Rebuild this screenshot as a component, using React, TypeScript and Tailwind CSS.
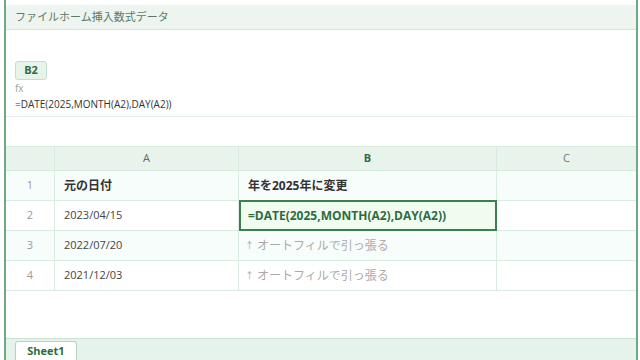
import React from "react";

const font = {
  fontFamily: '"Open Sans", "Noto Sans CJK JP", sans-serif',
};

type Row = {
  n: number;
  a: string;
  b: string;
  kind: "head" | "active" | "hint" | "plain";
};

const rows: Row[] = [
  { n: 1, a: "元の日付", b: "年を2025年に変更", kind: "head" },
  { n: 2, a: "2023/04/15", b: "=DATE(2025,MONTH(A2),DAY(A2))", kind: "active" },
  { n: 3, a: "2022/07/20", b: "オートフィルで引っ張る", kind: "hint" },
  { n: 4, a: "2021/12/03", b: "オートフィルで引っ張る", kind: "hint" },
];

const App: React.FC = () => {
  return (
    <div className="w-[640px] h-[360px] bg-white overflow-hidden" style={font}>
      <div className="ml-[4px] w-[634px] h-[360px] border-l-2 border-r-2 border-[#6fa882] flex flex-col">
        <div className="h-[5px] bg-white" />
        <div className="h-[25px] bg-[#eef5f1] border-b border-[#cfe5d7] flex items-center pl-[9px] text-[11px] text-[#5b7a66]">
          ファイルホーム挿入数式データ
        </div>

        {/* formula area */}
        <div className="h-[87px] border-b border-[#e1efe6] flex flex-col pl-[9px] pt-[31px]">
          <div className="w-[32px] h-[19px] rounded-[3px] bg-[#e6f4ea] border border-[#c6dfcd] flex items-center justify-center text-[11px] font-bold text-[#2f6b40]">
            B2
          </div>
          <div className="text-[10px] leading-[12px] text-[#9aa59e] mt-[2px]">fx</div>
          <div className="text-[10px] leading-[14px] text-[#333] mt-[3px]">
            =DATE(2025,MONTH(A2),DAY(A2))
          </div>
        </div>

        {/* grid */}
        <div className="mt-[29px]">
          <div className="flex h-[25px] bg-[#e8f3ec] border-y border-[#d6eadd] text-[11px]">
            <div className="w-[49px] border-r border-[#d6eadd]" />
            <div className="w-[184px] border-r border-[#d6eadd] flex items-center justify-center text-[#666]">A</div>
            <div className="w-[258px] border-r border-[#d6eadd] flex items-center justify-center font-bold text-[#2f6b40]">B</div>
            <div className="flex-1 flex items-center justify-center text-[#777]">C</div>
          </div>
          {rows.map((r) => (
            <div
              key={r.n}
              className={`flex h-[30px] border-b border-[#d9ece0] ${
                r.n % 2 === 1 ? "bg-[#f7fdfb]" : "bg-white"
              }`}
            >
              <div className="w-[49px] border-r border-[#d9ece0] flex items-center justify-center text-[11px] text-[#999]">
                {r.n}
              </div>
              <div
                className={`w-[184px] border-r border-[#d9ece0] flex items-center pl-[9px] ${
                  r.kind === "head" ? "text-[12px] font-bold text-[#333]" : "text-[11px] text-[#444]"
                }`}
              >
                {r.a}
              </div>
              {r.kind === "active" ? (
                <div className="w-[258px] -my-px h-[31px] border-2 border-[#3f7d52] bg-[#f1fcf1] flex items-center pl-[7px] text-[12px] font-bold text-[#2f6b40]">
                  {r.b}
                </div>
              ) : r.kind === "hint" ? (
                <div className="w-[258px] border-r border-[#d9ece0] flex items-center pl-[6px] text-[12px] text-[#aaa]">
                  <span className="text-[9px] mr-[3px]">↑</span>
                  {r.b}
                </div>
              ) : (
                <div className="w-[258px] border-r border-[#d9ece0] flex items-center pl-[9px] text-[12px] font-bold text-[#333]">
                  {r.b}
                </div>
              )}
              <div className="flex-1" />
            </div>
          ))}
        </div>

        <div className="flex-1" />

        {/* sheet tabs */}
        <div className="h-[22px] bg-[#e6f3ec] border-t border-[#c9e2d1] flex items-end pl-[9px]">
          <div className="w-[62px] h-[19px] bg-white border border-b-0 border-[#b8d3c0] rounded-t-[3px] flex items-center justify-center text-[11px] font-bold text-[#2f6b40]">
            Sheet1
          </div>
        </div>
      </div>
    </div>
  );
};

export default App;
